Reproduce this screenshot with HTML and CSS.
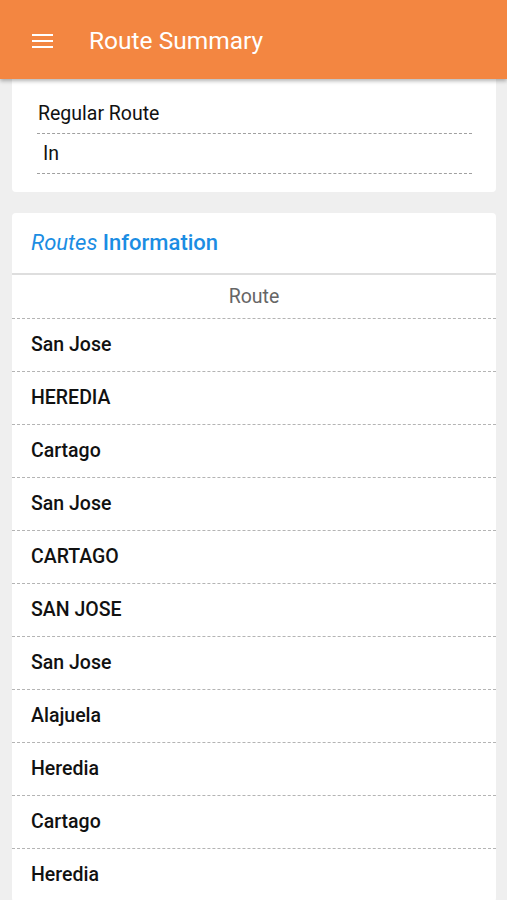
FILE: index.html
```html
<!DOCTYPE html>
<html lang="en">

<head>
    <meta charset="UTF-8">
    <meta name="viewport" content="width=device-width, initial-scale=1.0">
    <title>Route Summary</title>
    <link rel="stylesheet" href="styles.css">
</head>

<body>
    <header class="toolbar">
        <span class="menu-btn">
            <span></span>
            <span></span>
            <span></span>
        </span>
        <h1 class="toolbar-title">Route Summary</h1>
    </header>

    <div class="content">
        <div class="card filters">
            <div class="field">Regular Route</div>
            <div class="field field-select">In</div>
        </div>

        <div class="card routes">
            <h2 class="card-title"><em>Routes</em> Information</h2>
            <div class="table-head">Route</div>
            <div class="row">San Jose</div>
            <div class="row">HEREDIA</div>
            <div class="row">Cartago</div>
            <div class="row">San Jose</div>
            <div class="row">CARTAGO</div>
            <div class="row">SAN JOSE</div>
            <div class="row">San Jose</div>
            <div class="row">Alajuela</div>
            <div class="row">Heredia</div>
            <div class="row">Cartago</div>
            <div class="row">Heredia</div>
        </div>
    </div>
</body>

</html>
```

FILE: styles.css
```css
body {
    margin: 0;
    background: #efefef;
    font-family: Roboto, "Noto Sans", sans-serif;
    color: #111;
    overflow: hidden;
}

.toolbar {
    position: relative;
    z-index: 2;
    height: 79px;
    background: #f38641;
    display: flex;
    align-items: center;
    padding-left: 32px;
    box-shadow: 0 2px 4px rgba(0, 0, 0, 0.3);
}

.menu-btn {
    display: flex;
    flex-direction: column;
    justify-content: space-between;
    width: 21px;
    height: 14px;
    margin-top: 2px;
}

.menu-btn span {
    display: block;
    height: 2px;
    background: #fff;
}

.toolbar-title {
    margin: 2px 0 0 36px;
    font-size: 24.5px;
    font-weight: 400;
    color: #fff;
}

.content {
    padding: 0 11px 0 12px;
}

.card {
    background: #fff;
    border-radius: 4px;
}

.filters {
    border-radius: 0 0 4px 4px;
    padding: 15px 24px 18px 25px;
    margin-bottom: 21px;
}

.field {
    height: 39px;
    line-height: 39px;
    font-size: 19.5px;
    border-bottom: 1px dashed #a0a0a0;
    padding-left: 1px;
}

.field-select {
    padding-left: 6px;
}

.card-title {
    margin: 0;
    height: 60px;
    line-height: 60px;
    padding-left: 19px;
    font-size: 22px;
    font-weight: 500;
    color: #1b8de3;
    border-bottom: 2px solid #dedede;
}

.card-title em {
    font-weight: 400;
}

.table-head {
    height: 43px;
    line-height: 43px;
    text-align: center;
    font-size: 19.5px;
    color: #666;
    border-bottom: 1px dashed #b4b4b4;
}

.row {
    height: 52px;
    line-height: 52px;
    padding-left: 19px;
    font-size: 19.5px;
    font-weight: 500;
    border-bottom: 1px dashed #b4b4b4;
}
```
